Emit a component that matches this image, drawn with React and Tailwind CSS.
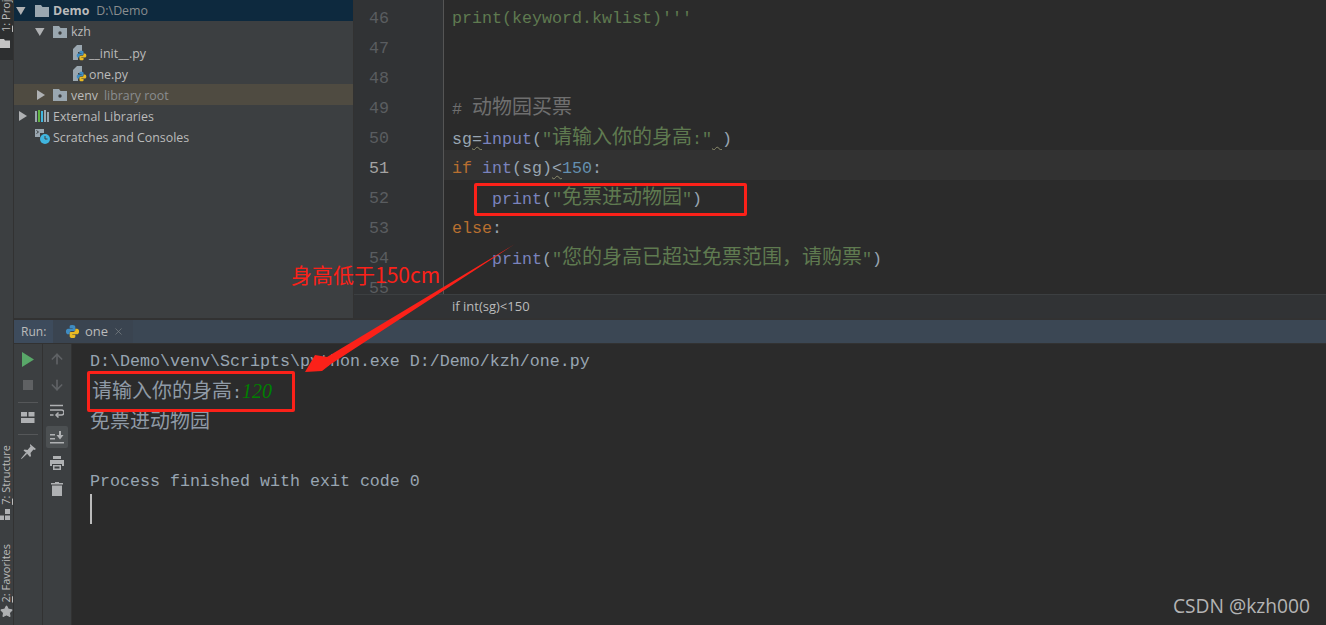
import { ArrowUp, ArrowDown, Star, X } from "lucide-react";

const mono = "font-['Liberation_Mono','Noto_Sans_CJK_SC',monospace] text-[16.67px]";

// CJK glyphs sit on a 20px grid, latin on 10px
function C({ children, className = "" }) {
  return <span className={`text-[20px] ${className}`}>{children}</span>;
}

function Squiggle({ children }) {
  return <span className="underline decoration-wavy decoration-[#8c8c6c] decoration-1 underline-offset-2">{children}</span>;
}

function PyLogo({ size = 14 }) {
  return (
    <svg width={size} height={size} viewBox="0 0 16 16">
      <path d="M8 1C5 1 5 2 5 3v1.500h3.200V5H3.200C2 5 1 6 1 8s1 3 2.200 3H5V9.500C5 8.300 6 7.500 7 7.500h2.500C10.500 7.500 11 7 11 6V3c0-1-1-2-3-2z" fill="#3f8cc2" />
      <path d="M8 15c3 0 3-1 3-2v-1.500H7.800V11h5C14 11 15 10 15 8s-1-3-2.200-3H11v1.500c0 1.200-1 2-2 2H6.500C5.500 8.500 5 9 5 10v3c0 1 1 2 3 2z" fill="#e8b923" />
    </svg>
  );
}

function PyFile() {
  return (
    <span className="relative block w-[14px] h-[16px] shrink-0">
      <svg width="14" height="16" viewBox="0 0 14 16" className="block">
        <path d="M0 4 4 0h5v7H5v8H0z" fill="#9aa7b0" />
      </svg>
      <span className="absolute left-[3px] top-[5px]"><PyLogo size={11} /></span>
    </span>
  );
}

function Folder({ dot = false }) {
  return (
    <svg width="14" height="12" viewBox="0 0 14 12" className="shrink-0">
      <path d="M0 0h6l1.500 2H14v10H0z" fill="#9aa7b0" />
      {dot && <circle cx="7" cy="7" r="1.700" fill="#3c3f41" />}
    </svg>
  );
}

function Tri({ open = false }) {
  return (
    <svg width="10" height="10" viewBox="0 0 10 10" className="shrink-0">
      {open ? <path d="M0 1h9.500L4.800 9z" fill="#afb1b3" /> : <path d="M1 0l8 5-8 5z" fill="#afb1b3" />}
    </svg>
  );
}

function Tree() {
  const row = "h-[21px] flex items-center whitespace-nowrap";
  return (
    <div className="w-[340px] shrink-0 bg-[#3c3f41] border-r border-[#323232] text-[12.4px] text-[#bbbbbb] font-['Open_Sans',sans-serif] leading-none">
      <div className={`${row} pl-[2px] bg-[#0d293e]`}>
        <Tri open />
        <span className="ml-[9px]"><Folder /></span>
        <span className="ml-[4px] pt-[2px] font-bold">Demo</span>
        <span className="ml-[7px] pt-[2px] text-[#8a8d8f]">D:\Demo</span>
      </div>
      <div className={`${row} pl-[21px]`}>
        <Tri open />
        <span className="ml-[8px]"><Folder dot /></span>
        <span className="ml-[4px] pt-[2px]">kzh</span>
      </div>
      <div className={`${row} pl-[59px]`}>
        <PyFile />
        <span className="ml-[2px] pt-[3px]">__init__.py</span>
      </div>
      <div className={`${row} pl-[59px]`}>
        <PyFile />
        <span className="ml-[2px] pt-[3px]">one.py</span>
      </div>
      <div className={`${row} pl-[22px] bg-[#4f4b41]`}>
        <Tri />
        <span className="ml-[7px]"><Folder dot /></span>
        <span className="ml-[4px] pt-[3px]">venv</span>
        <span className="ml-[6px] pt-[3px] text-[#8a8d8f]">library root</span>
      </div>
      <div className={`${row} pl-[4px]`}>
        <Tri />
        <svg width="14" height="12" viewBox="0 0 14 12" className="ml-[7px] shrink-0">
          <rect x="0" y="1" width="2" height="11" fill="#9aa7b0" />
          <rect x="3" y="0" width="2" height="12" fill="#62b543" />
          <rect x="6" y="1" width="2" height="11" fill="#40b6e0" />
          <rect x="9" y="0" width="2" height="12" fill="#9aa7b0" />
          <rect x="12" y="2" width="2" height="10" fill="#9aa7b0" />
        </svg>
        <span className="ml-[4px] pt-[3px]">External Libraries</span>
      </div>
      <div className={`${row} pl-[21px]`}>
        <svg width="15" height="15" viewBox="0 0 15 15" className="shrink-0">
          <path d="M0 0h9v4H5v4H0z" fill="#9aa7b0" />
          <path d="M1.500 1.500l2 1.500-2 1.500" fill="none" stroke="#3c3f41" />
          <circle cx="10" cy="10" r="5" fill="#40b6e0" />
          <path d="M10 7v3h2.500" fill="none" stroke="#3c3f41" />
        </svg>
        <span className="ml-[3px] pt-[3px]">Scratches and Consoles</span>
      </div>
    </div>
  );
}

function Line({ n, active = false, children }) {
  return (
    <div className="flex h-[30px] shrink-0">
      <div className={`w-[89px] shrink-0 pl-[15px] pt-[6px] leading-[26px] bg-[#313335] ${active ? "text-[#a4a3a3]" : "text-[#5a5d60]"}`}>
        {n}
      </div>
      <div className="w-px shrink-0 bg-[#555555]" />
      <div className={`flex-1 pl-[8px] pt-[6px] leading-[26px] whitespace-pre ${active ? "bg-[#323232]" : ""}`}>
        {children}
      </div>
    </div>
  );
}

function Editor() {
  const str = "text-[#5f7a50]";
  const fn = "text-[#7a83bd]";
  const kw = "text-[#b86f30]";
  const num = "text-[#6490b0]";
  return (
    <div className="flex-1 flex flex-col min-w-0">
      <div className={`h-[294px] overflow-hidden flex flex-col bg-[#2b2b2b] text-[#98a5b2] ${mono}`}>
        <Line n={46}><span className={str}>print(keyword.kwlist)'''</span></Line>
        <Line n={47} />
        <Line n={48} />
        <Line n={49}>
          <span className="text-[#6f6f6f]"># <C>动物园买票</C></span>
        </Line>
        <Line n={50}>
          sg<Squiggle>=</Squiggle><span className={fn}>input</span>(<span className={str}>"<C>请输入你的身高</C>:"</span><Squiggle> </Squiggle>)
        </Line>
        <Line n={51} active>
          <span className={kw}>if</span> <span className={fn}>int</span>(sg)<Squiggle>{"<"}</Squiggle><span className={num}>150</span>:
        </Line>
        <Line n={52}>
          {"    "}<span className={fn}>print</span>(<span className={str}>"<C>免票进动物园</C>"</span>)
        </Line>
        <Line n={53}>
          <span className={kw}>else</span>:
        </Line>
        <Line n={54}>
          {"    "}<span className={fn}>print</span>(<span className={str}>"<C>您的身高已超过免票范围，请购票</C>"</span>)
        </Line>
        <Line n={55} />
      </div>
      <div className="h-[24px] shrink-0 bg-[#313335] border-t border-[#3c3f41] pl-[98px] flex items-center text-[13px] text-[#bbbbbb] font-['Open_Sans',sans-serif]">
        if int(sg)&lt;150
      </div>
    </div>
  );
}

function SideLabel({ num, children }) {
  return (
    <span className="[writing-mode:vertical-rl] rotate-180 text-[11px] leading-[11px] text-[#bbbbbb] whitespace-nowrap font-['Open_Sans',sans-serif]">
      <span className="underline">{num}</span>: {children}
    </span>
  );
}

function LeftStrip() {
  return (
    <div className="w-[14px] shrink-0 h-full bg-[#3c3f41] border-r border-[#323232] flex flex-col overflow-hidden">
      <div className="w-full h-[60px] shrink-0 bg-[#2d2f30] overflow-hidden flex flex-col justify-end pb-[12px]">
        <SideLabel num="1">Project</SideLabel>
        <svg width="10" height="9" viewBox="0 0 10 9" className="mt-[7px] shrink-0">
          <path d="M0 0h4l1 1.500h5V9H0z" fill="#c4c4c4" />
        </svg>
      </div>
      <div className="mt-[385px] flex flex-col">
        <SideLabel num="7">Structure</SideLabel>
        <svg width="10" height="11" viewBox="0 0 10 11" className="mt-[4px] shrink-0">
          <rect x="5" y="0" width="5" height="5" fill="#afb1b3" />
          <rect x="0" y="6.500" width="4" height="4.500" fill="#afb1b3" />
          <rect x="5" y="6.500" width="5" height="4.500" fill="#afb1b3" />
        </svg>
      </div>
      <div className="mt-[24px] flex flex-col">
        <SideLabel num="2">Favorites</SideLabel>
        <Star size={13} className="mt-[3px] shrink-0 text-[#afb1b3] fill-[#afb1b3]" />
      </div>
    </div>
  );
}

function RunPanel() {
  const tool = "h-[26px] w-full flex items-center justify-center shrink-0";
  return (
    <div className="flex-1 flex flex-col min-h-0">
      <div className="h-[2px] shrink-0 bg-[#323232]" />
      <div className="h-[23px] shrink-0 flex bg-[#3b4754] text-[12px] text-[#bbbbbb] font-['Open_Sans',sans-serif] items-stretch">
        <div className="w-[39px] shrink-0 pl-[7px] flex items-center bg-[#3d4b5c]">Run:</div>
        <div className="w-[80px] shrink-0 bg-[#3a4450] pl-[12px] flex items-center gap-[5px]">
          <PyLogo size={15} />
          <span className="text-[13px]">one</span>
          <X size={11} strokeWidth={1.500} className="text-[#7f8488]" />
        </div>
      </div>
      <div className="h-[1px] shrink-0 bg-[#323232]" />
      <div className="flex-1 flex min-h-0">
        <div className="w-[29px] shrink-0 bg-[#3c3f41] border-r border-[#323232] flex flex-col items-center pt-[2px]">
          <div className={tool}>
            <svg width="12" height="15" viewBox="0 0 12 15"><path d="M0 0l12 7.500L0 15z" fill="#59a869" /></svg>
          </div>
          <div className={tool}>
            <svg width="10" height="10" viewBox="0 0 10 10"><rect width="10" height="10" fill="#5f6163" /></svg>
          </div>
          <div className="h-px w-[20px] bg-[#555759] mt-[4px] shrink-0" />
          <div className="h-[28px] w-full flex items-center justify-center shrink-0">
            <svg width="14" height="11" viewBox="0 0 14 11">
              <rect x="0" y="0" width="6" height="4.500" fill="#afb1b3" />
              <rect x="7.500" y="0" width="6" height="4.500" fill="#afb1b3" />
              <rect x="0" y="6" width="13.500" height="5" fill="#afb1b3" />
            </svg>
          </div>
          <div className="h-px w-[20px] bg-[#555759] mt-[3px] shrink-0" />
          <div className="h-[32px] w-full flex items-center justify-center shrink-0">
            <svg width="15" height="15" viewBox="0 0 15 15" fill="#afb1b3">
              <path d="M9 0l6 5-1.500 1-1-.5-3 3.500.5 3-1 1L5.500 9 5 8.500 2.500 6.500l1-1 3 .5 3-3.500L9 1.500z" />
              <path d="M5 8.500l1.200 1.200L.6 15 0 14.400z" />
            </svg>
          </div>
        </div>
        <div className="w-[29px] shrink-0 bg-[#3c3f41] border-r border-[#323232] flex flex-col items-center pt-[2px]">
          <div className={tool}><ArrowUp size={16} strokeWidth={2.500} className="text-[#5f6265]" /></div>
          <div className={tool}><ArrowDown size={16} strokeWidth={2.500} className="text-[#5f6265]" /></div>
          <div className={tool}>
            <svg width="14" height="14" viewBox="0 0 14 14" fill="none" stroke="#afb1b3" strokeWidth="1.500">
              <path d="M0 1.500h13M0 6h11.500a2 2 0 0 1 0 5H7M0 11h3.500" />
              <path d="M8.500 8.500 6 11l2.500 2.500" />
            </svg>
          </div>
          <div className="h-[22px] w-[22px] my-[2px] rounded-[2px] bg-[#4c5052] flex items-center justify-center shrink-0">
            <svg width="14" height="13" viewBox="0 0 14 13" fill="#afb1b3">
              <rect x="0" y="3" width="5" height="1.500" />
              <rect x="0" y="7" width="5" height="1.500" />
              <rect x="0" y="11" width="14" height="1.500" />
              <path d="M9 0h2v4h2.500L10 8.500 6.500 4H9z" />
            </svg>
          </div>
          <div className={tool}>
            <svg width="14" height="14" viewBox="0 0 14 14" fill="#afb1b3">
              <rect x="3" y="0" width="8" height="3" />
              <path d="M0 4h14v6h-2V8H2v2H0z" />
              <path d="M3 9h8v5H3zM4.500 10.500v2h5v-2z" fillRule="evenodd" />
            </svg>
          </div>
          <div className={tool}>
            <svg width="12" height="14" viewBox="0 0 12 14" fill="#afb1b3">
              <path d="M4 0h4v1h4v1.500H0V1h4z" />
              <path d="M1 3.500h10V14H1z" />
            </svg>
          </div>
        </div>
        <div className={`flex-1 bg-[#2b2b2b] pl-[18px] pt-[1px] text-[#98a5b2] leading-[26px] ${mono}`}>
          <div className="h-[30px] pt-[4px]">D:\Demo\venv\Scripts\python.exe D:/Demo/kzh/one.py</div>
          <div className="h-[30px] pt-[3px] pl-[2px]"><C className="text-[#8f9aa6]">请输入你的身高</C>:<em className="text-[20px] text-[#008000] font-['Liberation_Serif',serif]">120</em></div>
          <div className="h-[30px] pt-[5px]"><C className="text-[#8f9aa6]">免票进动物园</C></div>
          <div className="h-[30px]" />
          <div className="h-[30px] pt-[4px]">Process finished with exit code 0</div>
          <div className="w-[2px] h-[30px] mt-[-1px] bg-[#bbbbbb]" />
        </div>
      </div>
    </div>
  );
}

export default function App() {
  return (
    <div className="relative w-[1326px] h-[625px] overflow-hidden flex bg-[#2b2b2b]">
      <LeftStrip />
      <div className="flex-1 flex flex-col min-w-0">
        <div className="h-[318px] shrink-0 flex">
          <Tree />
          <Editor />
        </div>
        <RunPanel />
      </div>

      {/* red markup drawn over the screenshot */}
      <div className="absolute left-[474px] top-[183px] w-[273px] h-[33px] border-[3px] border-[#fb2119] rounded-[2px]" />
      <div className="absolute left-[87px] top-[371px] w-[208px] h-[41px] border-[3px] border-[#fb2119] rounded-[2px]" />
      <svg className="absolute left-0 top-0 pointer-events-none" width="1326" height="625">
        <polygon points="515,244 327,357 315,355 305,372 322,371 331,364" fill="#fb2119" />
      </svg>
      <span className="absolute left-[291px] top-[260px] text-[21px] leading-[28px] text-[#fb2119] font-['Noto_Sans_CJK_SC',sans-serif]">身高低于150cm</span>
      <span className="absolute left-[1173px] top-[592px] text-[19.2px] leading-[28px] text-[#b4b4b4] font-['Open_Sans',sans-serif]">CSDN @kzh000</span>
    </div>
  );
}
